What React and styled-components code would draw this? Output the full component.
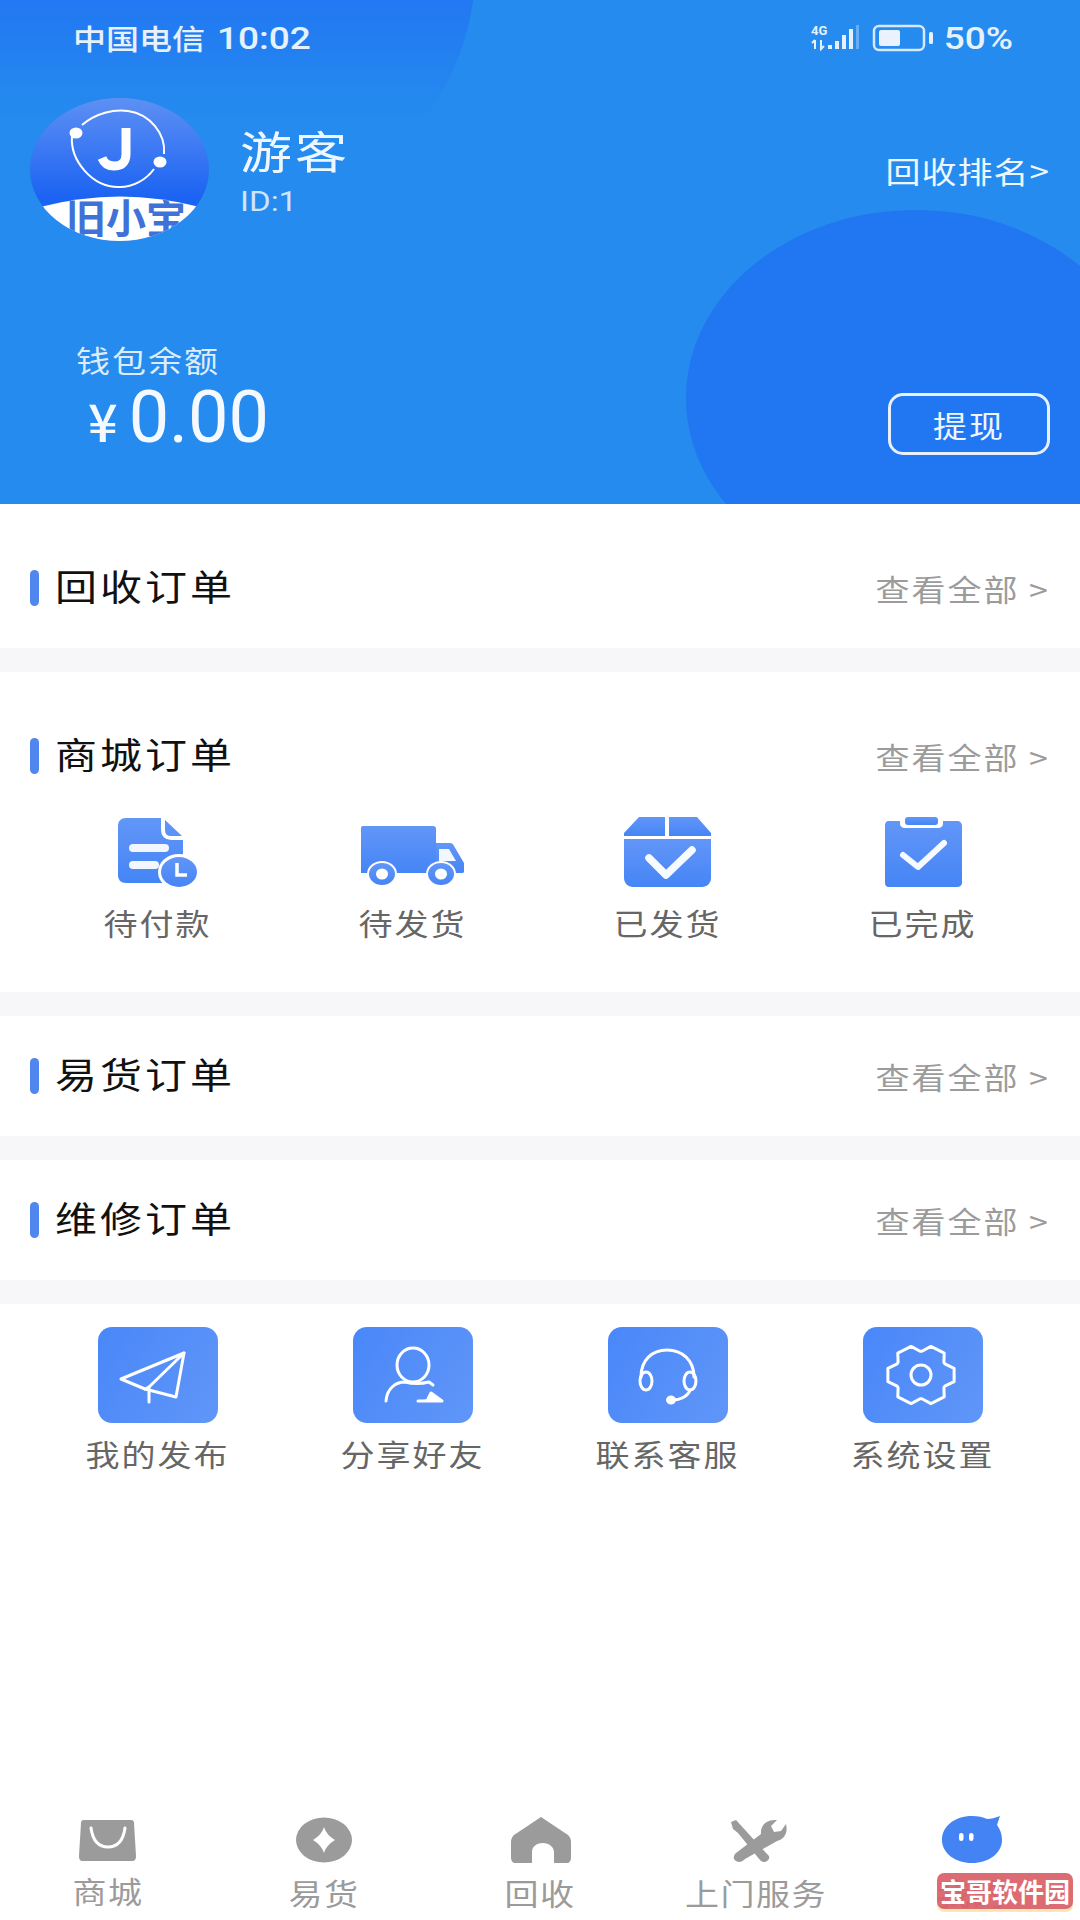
import React from "react";
import styled, { createGlobalStyle, css } from "styled-components";

const GlobalStyle = createGlobalStyle`
  html, body {
    margin: 0;
    padding: 0;
    background: #fff;
    font-family: "Noto Sans CJK SC", "Noto Sans", sans-serif;
  }
`;

// the screenshot is a little squashed vertically, text included
const squash = css`
  display: inline-block;
  transform: scaleY(0.86);
`;

const Page = styled.div`
  position: relative;
  width: 1080px;
  height: 1920px;
  display: flex;
  flex-direction: column;
  background: #fff;
  overflow: hidden;
`;

const Header = styled.header`
  position: relative;
  height: 504px;
  box-sizing: border-box;
  padding: 16px 30px 0;
  background: #258bee;
  color: #eef6ff;
  overflow: hidden;
`;

const TopBlob = styled.div`
  position: absolute;
  left: -95px;
  top: -290px;
  width: 570px;
  height: 520px;
  border-radius: 50%;
  background: linear-gradient(to bottom, #2278f2 56%, #258bee 79%);
`;

const BottomBlob = styled.div`
  position: absolute;
  left: 686px;
  top: 210px;
  width: 460px;
  height: 376px;
  border-radius: 50%;
  background: #2176f1;
`;

const HeaderContent = styled.div`
  position: relative;
  display: flex;
  flex-direction: column;
`;

const StatusBar = styled.div`
  height: 44px;
  display: flex;
  align-items: center;
  justify-content: space-between;
  padding: 0 37px 0 43px;
  color: #e6f1fd;
`;

const StatusGroup = styled.div`
  display: flex;
  align-items: center;
  gap: ${(p) => p.$gap || 0}px;
`;

const StatusText = styled.span`
  ${squash}
  font-family: ${(p) => (p.$latin ? "Roboto, sans-serif" : "inherit")};
  font-size: ${(p) => (p.$latin ? 37 : 33)}px;
  font-weight: 500;
  margin-left: ${(p) => p.$left || 0}px;
`;

const ProfileRow = styled.div`
  margin-top: 38px;
  display: flex;
  align-items: center;
`;

const NameColumn = styled.div`
  margin-left: 31px;
  flex: 1;
  display: flex;
  flex-direction: column;
  align-items: flex-start;
  margin-top: 2px;
`;

const UserName = styled.span`
  ${squash}
  font-size: 52px;
  line-height: 58px;
  letter-spacing: 3px;
`;

const UserId = styled.span`
  ${squash}
  margin-top: 5px;
  font-family: Roboto, sans-serif;
  font-size: 33px;
  line-height: 36px;
  color: #cfe5fb;
`;

const RankLink = styled.span`
  ${squash}
  font-size: 35px;
  line-height: 44px;
  letter-spacing: 1px;
`;

const WalletRow = styled.div`
  margin-top: 99px;
  display: flex;
  justify-content: space-between;
  align-items: flex-end;
`;

const WalletInfo = styled.div`
  padding-left: 46px;
  display: flex;
  flex-direction: column;
  align-items: flex-start;
`;

const WalletLabel = styled.span`
  ${squash}
  font-size: 34px;
  line-height: 40px;
  letter-spacing: 2px;
  color: #dcecfd;
`;

const Amount = styled.div`
  height: 75px;
  display: flex;
  align-items: center;
  padding-left: 12px;
  font-family: Roboto, sans-serif;
  color: #f4f9ff;
`;

const Yen = styled.span`
  font-family: "Noto Sans CJK SC", sans-serif;
  font-size: 52px;
  font-weight: 500;
  margin-right: 11px;
  margin-top: 4px;
`;

const AmountValue = styled.span`
  font-size: 72px;
`;

const WithdrawButton = styled.button`
  width: 162px;
  height: 62px;
  box-sizing: border-box;
  border: 3px solid #e6f1fd;
  border-radius: 15px;
  background: transparent;
  color: #eef6ff;
  font-family: inherit;
  font-size: 34px;
  letter-spacing: 2px;
  padding: 0;

  span {
    ${squash}
  }
`;

const Section = styled.section`
  background: #fff;
  padding: ${(p) => (p.$first ? "24px 0 0" : "0")};
  padding-bottom: ${(p) => p.$bottom || 0}px;
`;

const Divider = styled.div`
  height: 24px;
  background: #f7f7f9;
`;

const TitleRow = styled.div`
  height: 120px;
  display: flex;
  align-items: center;
  justify-content: space-between;
  padding: 0 30px;
`;

const TitleGroup = styled.div`
  display: flex;
  align-items: center;
`;

const Accent = styled.i`
  width: 9px;
  height: 36px;
  border-radius: 5px;
  background: #4f87ee;
  margin-right: 16px;
`;

const Title = styled.h2`
  ${squash}
  margin: 0 0 5px;
  font-size: 42px;
  font-weight: 400;
  letter-spacing: 3px;
  color: #111;
`;

const ViewAll = styled.span`
  ${squash}
  font-size: 34px;
  letter-spacing: 2px;
  color: #9b9b9b;
`;

const IconGrid = styled.div`
  display: grid;
  grid-template-columns: repeat(4, 255px);
  padding: 0 30px;
  margin-top: ${(p) => p.$top || 0}px;
  padding-top: ${(p) => p.$padTop || 0}px;
`;

const GridItem = styled.div`
  display: flex;
  flex-direction: column;
  align-items: center;
`;

const GridLabel = styled.span`
  ${squash}
  margin-top: ${(p) => p.$top}px;
  font-size: 34px;
  line-height: 44px;
  letter-spacing: 2px;
  color: #666;
`;

const Tile = styled.div`
  width: 120px;
  height: 96px;
  border-radius: 14px;
  background: linear-gradient(120deg, #4987f9, #6096f8);
  display: flex;
`;

const TabBar = styled.nav`
  position: relative;
  margin-top: auto;
  height: 110px;
  box-sizing: border-box;
  padding-top: 5px;
  display: grid;
  grid-template-columns: repeat(5, 216px);
`;

const Tab = styled.div`
  display: flex;
  flex-direction: column;
  align-items: center;
`;

const TabLabel = styled.span`
  ${squash}
  font-size: 34px;
  line-height: 44px;
  letter-spacing: 1.5px;
  color: #9b9b9b;
  margin-top: ${(p) => (p.$raised ? "4px" : "6px")};
`;

const Watermark = styled.div`
  position: absolute;
  right: 7px;
  bottom: 11px;
  width: 136px;
  height: 36px;
  border-radius: 7px;
  background: rgba(217, 96, 104, 0.93);
  box-shadow: 0 3px 0 #fbe8b4;
  color: #fff;
  font-size: 26px;
  font-weight: 700;
  line-height: 36px;
  text-align: center;
  white-space: nowrap;
`;

const HiddenDefs = styled.svg`
  position: absolute;
  width: 0;
  height: 0;
`;

const BLUE = "url(#iconBlue)";

const StatusIcons = () => (
  <svg width="122" height="30" viewBox="0 0 122 30">
    <text x="0" y="12" fontFamily="Roboto, sans-serif" fontWeight="700" fontSize="13" fill="#e6f1fd">4G</text>
    <path d="M4 17v9M1 20l3-3M10 17v9l3-3" stroke="#e6f1fd" strokeWidth="2" fill="none" />
    <g fill="#e6f1fd">
      <rect x="17" y="22" width="4" height="4" />
      <rect x="24" y="18" width="4" height="8" />
      <rect x="31" y="12" width="4" height="14" />
      <rect x="38" y="6" width="4" height="20" />
      <rect x="45" y="2" width="3" height="24" opacity="0.35" />
    </g>
    <rect x="63" y="3" width="50" height="24" rx="5" fill="none" stroke="#d6e8fb" strokeWidth="2.5" />
    <rect x="68" y="7" width="21" height="16" rx="2" fill="#e9f2fd" />
    <rect x="118" y="9" width="4" height="12" rx="1.5" fill="#e6f1fd" />
  </svg>
);

const Avatar = () => (
  <svg width="179" height="143" viewBox="0 0 179 143">
    <defs>
      <linearGradient id="logoBlue" x1="0" y1="0" x2="0" y2="1">
        <stop offset="0" stopColor="#5e90f4" />
        <stop offset="0.7" stopColor="#1b63f2" />
      </linearGradient>
      <clipPath id="logoClip">
        <ellipse cx="89.5" cy="71.5" rx="89.5" ry="71.5" />
      </clipPath>
      <clipPath id="capClip">
        <path d="M10 109Q90 88 170 109L130 150H50Z" />
      </clipPath>
    </defs>
    <ellipse cx="89.5" cy="71.5" rx="89.5" ry="71.5" fill="url(#logoBlue)" />
    <g clipPath="url(#logoClip)">
      <path d="M10 109Q90 88 170 109L170 143H10Z" fill="#fff" />
      <g clipPath="url(#capClip)">
        <text x="36" y="135" fontFamily="'Noto Sans CJK SC', sans-serif" fontWeight="700" fontSize="40" fill="#3f72d8">旧小宝</text>
      </g>
    </g>
    <path d="M52 27C66 15 84 11 98 13C120 16 136 36 134 56" fill="none" stroke="#fff" strokeWidth="2" />
    <path d="M42 38C40 62 62 90 90 89C103 89 116 82 124 71" fill="none" stroke="#fff" strokeWidth="2" />
    <ellipse cx="46" cy="35" rx="6.5" ry="5.5" fill="#fff" />
    <ellipse cx="130" cy="64" rx="6.5" ry="5.5" fill="#fff" />
    <path d="M96 30V56C96 65 91 68 84 68C78 68 74 65 72 60" fill="none" stroke="#fff" strokeWidth="9" />
  </svg>
);

const PendingPayIcon = () => (
  <svg width="110" height="80" viewBox="0 0 110 80">
    <path d="M23 5H60L80 24V62C80 67 77 70 72 70H23C18 70 15 67 15 62V13C15 8 18 5 23 5Z" fill={BLUE} />
    <path d="M60 2V17C60 22 63 25 68 25H83" fill="none" stroke="#fff" strokeWidth="4" />
    <rect x="26" y="31" width="40" height="8" rx="4" fill="#f2f6ff" />
    <rect x="26" y="48" width="30" height="8" rx="4" fill="#f2f6ff" />
    <ellipse cx="76" cy="59" rx="21" ry="18" fill="#fff" />
    <ellipse cx="76" cy="59" rx="18" ry="15" fill={BLUE} />
    <path d="M74 50V62H84" fill="none" stroke="#fff" strokeWidth="3.5" />
  </svg>
);

const TruckIcon = () => (
  <svg width="110" height="80" viewBox="0 0 110 80">
    <path d="M5 13H75C77 13 78 14 78 16V60H3V16C3 14 3 13 5 13Z" fill={BLUE} />
    <path d="M78 30H92C94 30 95 31 96 33L106 50V58C106 60 105 60 103 60H78Z" fill={BLUE} />
    <path d="M81 36H91L98 48H81Z" fill="#f2f6ff" />
    <ellipse cx="24" cy="61" rx="15" ry="13" fill="#fff" />
    <ellipse cx="24" cy="61" rx="13" ry="11" fill={BLUE} />
    <ellipse cx="24" cy="61" rx="6" ry="5.5" fill="#fff" />
    <ellipse cx="83" cy="61" rx="15" ry="13" fill="#fff" />
    <ellipse cx="83" cy="61" rx="13" ry="11" fill={BLUE} />
    <ellipse cx="83" cy="61" rx="6" ry="5.5" fill="#fff" />
  </svg>
);

const ShippedIcon = () => (
  <svg width="110" height="80" viewBox="0 0 110 80">
    <path d="M26 4H52V23H11V20Z" fill={BLUE} />
    <path d="M56 4H84L98 20V23H56Z" fill={BLUE} />
    <path d="M11 26H98V65C98 70 94 74 89 74H20C15 74 11 70 11 65Z" fill={BLUE} />
    <path d="M36 45L53 62L79 37" fill="none" stroke="#f7faff" strokeWidth="7.5" strokeLinecap="round" strokeLinejoin="round" />
  </svg>
);

const FinishedIcon = () => (
  <svg width="110" height="80" viewBox="0 0 110 80">
    <path d="M21 8H32V11C32 13 34 15 37 15H70C73 15 75 13 75 11V8H89C92 8 94 10 94 13V70C94 72 92 74 89 74H21C18 74 17 72 17 70V13C17 10 18 8 21 8Z" fill={BLUE} />
    <rect x="37" y="4" width="33" height="8" rx="3" fill={BLUE} />
    <path d="M35 42L50 54L76 30" fill="none" stroke="#f7faff" strokeWidth="6" strokeLinecap="round" strokeLinejoin="round" />
  </svg>
);

const TileSvg = ({ children }) => (
  <svg width="120" height="96" viewBox="0 0 120 96" fill="none" stroke="#fff" strokeWidth="3" strokeLinecap="round" strokeLinejoin="round">
    {children}
  </svg>
);

const PlaneIcon = () => (
  <TileSvg>
    <path d="M86 26L23 52L47 62L78 70Z" />
    <path d="M86 26L51 60V75" />
    <path d="M51 60L47 62" />
  </TileSvg>
);

const ShareIcon = () => (
  <TileSvg>
    <ellipse cx="60" cy="38" rx="16" ry="17" />
    <path d="M33 74C34 62 42 55 52 55C60 57 68 57 76 55L80 58" />
    <path d="M65 74H89L78 66L75 72" fill="#fff" />
  </TileSvg>
);

const HeadsetIcon = () => (
  <TileSvg>
    <path d="M33 50C33 33 44 23 59 23C74 23 86 33 86 50" />
    <ellipse cx="38" cy="54" rx="6" ry="9" />
    <ellipse cx="82" cy="54" rx="6" ry="9" />
    <path d="M82 63C80 69 73 73 64 73" />
    <ellipse cx="63" cy="73" rx="3.5" ry="3" fill="#fff" />
  </TileSvg>
);

const gearPath = Array.from({ length: 6 }, (_, i) => {
  const a = (i * Math.PI) / 3;
  const pt = (r, d) => {
    const t = a + (d * Math.PI) / 180;
    return `${(58 + r * Math.cos(t)).toFixed(1)} ${(48 + r * 0.88 * Math.sin(t)).toFixed(1)}`;
  };
  return `${i === 0 ? "M" : "L"}${pt(27, -28)}L${pt(34, -13)}L${pt(34, 13)}L${pt(27, 28)}`;
}).join("") + "Z";

const GearIcon = () => (
  <TileSvg>
    <path d={gearPath} />
    <ellipse cx="58" cy="48" rx="10" ry="10" />
  </TileSvg>
);

const TabSvg = ({ children }) => (
  <svg width="70" height="50" viewBox="0 0 70 50">
    {children}
  </svg>
);

const BagTab = () => (
  <TabSvg>
    <path d="M11 5H58C60 5 61 6 61 8L63 41C63 44 62 46 59 46H10C7 46 6 44 6 41L8 8C8 6 9 5 11 5Z" fill="#9b9b9b" />
    <path d="M18 13C20 27 26 32 35 32C44 32 50 27 52 13" fill="none" stroke="#fff" strokeWidth="3" strokeLinecap="round" />
  </TabSvg>
);

const CoinTab = () => (
  <TabSvg>
    <ellipse cx="35" cy="25" rx="28" ry="22.5" fill="#9b9b9b" />
    <path d="M35 12C37 18 41 22 46 25C41 28 37 32 35 38C33 32 29 28 24 25C29 22 33 18 35 12Z" fill="#fff" />
  </TabSvg>
);

const HomeTab = () => (
  <TabSvg>
    <path d="M36 2L63 20C65 22 66 24 66 27V43C66 46 64 48 62 48H49V37C49 32 44 28 38 28C31 28 27 32 27 37V48H10C8 48 6 46 6 43V27C6 24 7 22 9 20Z" fill="#9b9b9b" />
  </TabSvg>
);

const ToolsTab = () => (
  <TabSvg>
    <path d="M10 7L15 5L46 39C49 41 49 44 46 46C44 48 41 47 39 45L17 18L12 14Z" fill="#9b9b9b" />
    <path d="M65 9C67 17 64 24 56 26L24 44C21 47 18 48 15 46C12 44 12 41 15 38L40 19C39 11 45 4 56 5L50 11L53 17L60 16Z" fill="#9b9b9b" />
  </TabSvg>
);

const ChatTab = () => (
  <TabSvg>
    <path d="M35 1C41 1 46 2 50 4C54 4 58 3 63 1C62 4 61 7 60 10C63 14 65 19 65 25C65 38 52 48 35 48C18 48 5 38 5 25C5 11 18 1 35 1Z" fill="#4383f3" />
    <rect x="22" y="18" width="4.5" height="8" rx="2.2" fill="#fff" />
    <rect x="32" y="18" width="4.5" height="8" rx="2.2" fill="#fff" />
  </TabSvg>
);

const orderRows = ["回收订单", "商城订单", "易货订单", "维修订单"];

const orderStates = [
  { label: "待付款", Icon: PendingPayIcon },
  { label: "待发货", Icon: TruckIcon },
  { label: "已发货", Icon: ShippedIcon },
  { label: "已完成", Icon: FinishedIcon },
];

const shortcuts = [
  { label: "我的发布", Icon: PlaneIcon },
  { label: "分享好友", Icon: ShareIcon },
  { label: "联系客服", Icon: HeadsetIcon },
  { label: "系统设置", Icon: GearIcon },
];

const tabs = [
  { label: "商城", Icon: BagTab, raised: true },
  { label: "易货", Icon: CoinTab },
  { label: "回收", Icon: HomeTab },
  { label: "上门服务", Icon: ToolsTab },
  { label: "我的", Icon: ChatTab },
];

const OrderTitle = ({ text }) => (
  <TitleRow>
    <TitleGroup>
      <Accent />
      <Title>{text}</Title>
    </TitleGroup>
    <ViewAll>查看全部 &gt;</ViewAll>
  </TitleRow>
);

const App = () => {
  return (
    <Page>
      <GlobalStyle />
      <HiddenDefs aria-hidden="true">
        <defs>
          <linearGradient id="iconBlue" x1="0" y1="0" x2="0" y2="1">
            <stop offset="0" stopColor="#6296f8" />
            <stop offset="1" stopColor="#4585f6" />
          </linearGradient>
        </defs>
      </HiddenDefs>

      <Header>
        <TopBlob />
        <BottomBlob />
        <HeaderContent>
          <StatusBar>
            <StatusGroup>
              <StatusText>中国电信</StatusText>
              <StatusText $latin $left={12}>10:02</StatusText>
            </StatusGroup>
            <StatusGroup $gap={11}>
              <StatusIcons />
              <StatusText $latin>50%</StatusText>
            </StatusGroup>
          </StatusBar>

          <ProfileRow>
            <Avatar />
            <NameColumn>
              <UserName>游客</UserName>
              <UserId>ID:1</UserId>
            </NameColumn>
            <RankLink>回收排名&gt;</RankLink>
          </ProfileRow>

          <WalletRow>
            <WalletInfo>
              <WalletLabel>钱包余额</WalletLabel>
              <Amount>
                <Yen>¥</Yen>
                <AmountValue>0.00</AmountValue>
              </Amount>
            </WalletInfo>
            <WithdrawButton>
              <span>提现</span>
            </WithdrawButton>
          </WalletRow>
        </HeaderContent>
      </Header>

      <Section $first>
        <OrderTitle text={orderRows[0]} />
      </Section>
      <Divider />

      <Section $first $bottom={47}>
        <OrderTitle text={orderRows[1]} />
        <IconGrid $top={-3}>
          {orderStates.map(({ label, Icon }) => (
            <GridItem key={label}>
              <Icon />
              <GridLabel $top={8}>{label}</GridLabel>
            </GridItem>
          ))}
        </IconGrid>
      </Section>
      <Divider />

      <Section>
        <OrderTitle text={orderRows[2]} />
      </Section>
      <Divider />

      <Section>
        <OrderTitle text={orderRows[3]} />
      </Section>
      <Divider />

      <Section>
        <IconGrid $padTop={23}>
          {shortcuts.map(({ label, Icon }) => (
            <GridItem key={label}>
              <Tile>
                <Icon />
              </Tile>
              <GridLabel $top={9}>{label}</GridLabel>
            </GridItem>
          ))}
        </IconGrid>
      </Section>

      <TabBar>
        {tabs.map(({ label, Icon, raised }) => (
          <Tab key={label}>
            <Icon />
            <TabLabel $raised={raised}>{label}</TabLabel>
          </Tab>
        ))}
        <Watermark>宝哥软件园</Watermark>
      </TabBar>
    </Page>
  );
};

export default App;
